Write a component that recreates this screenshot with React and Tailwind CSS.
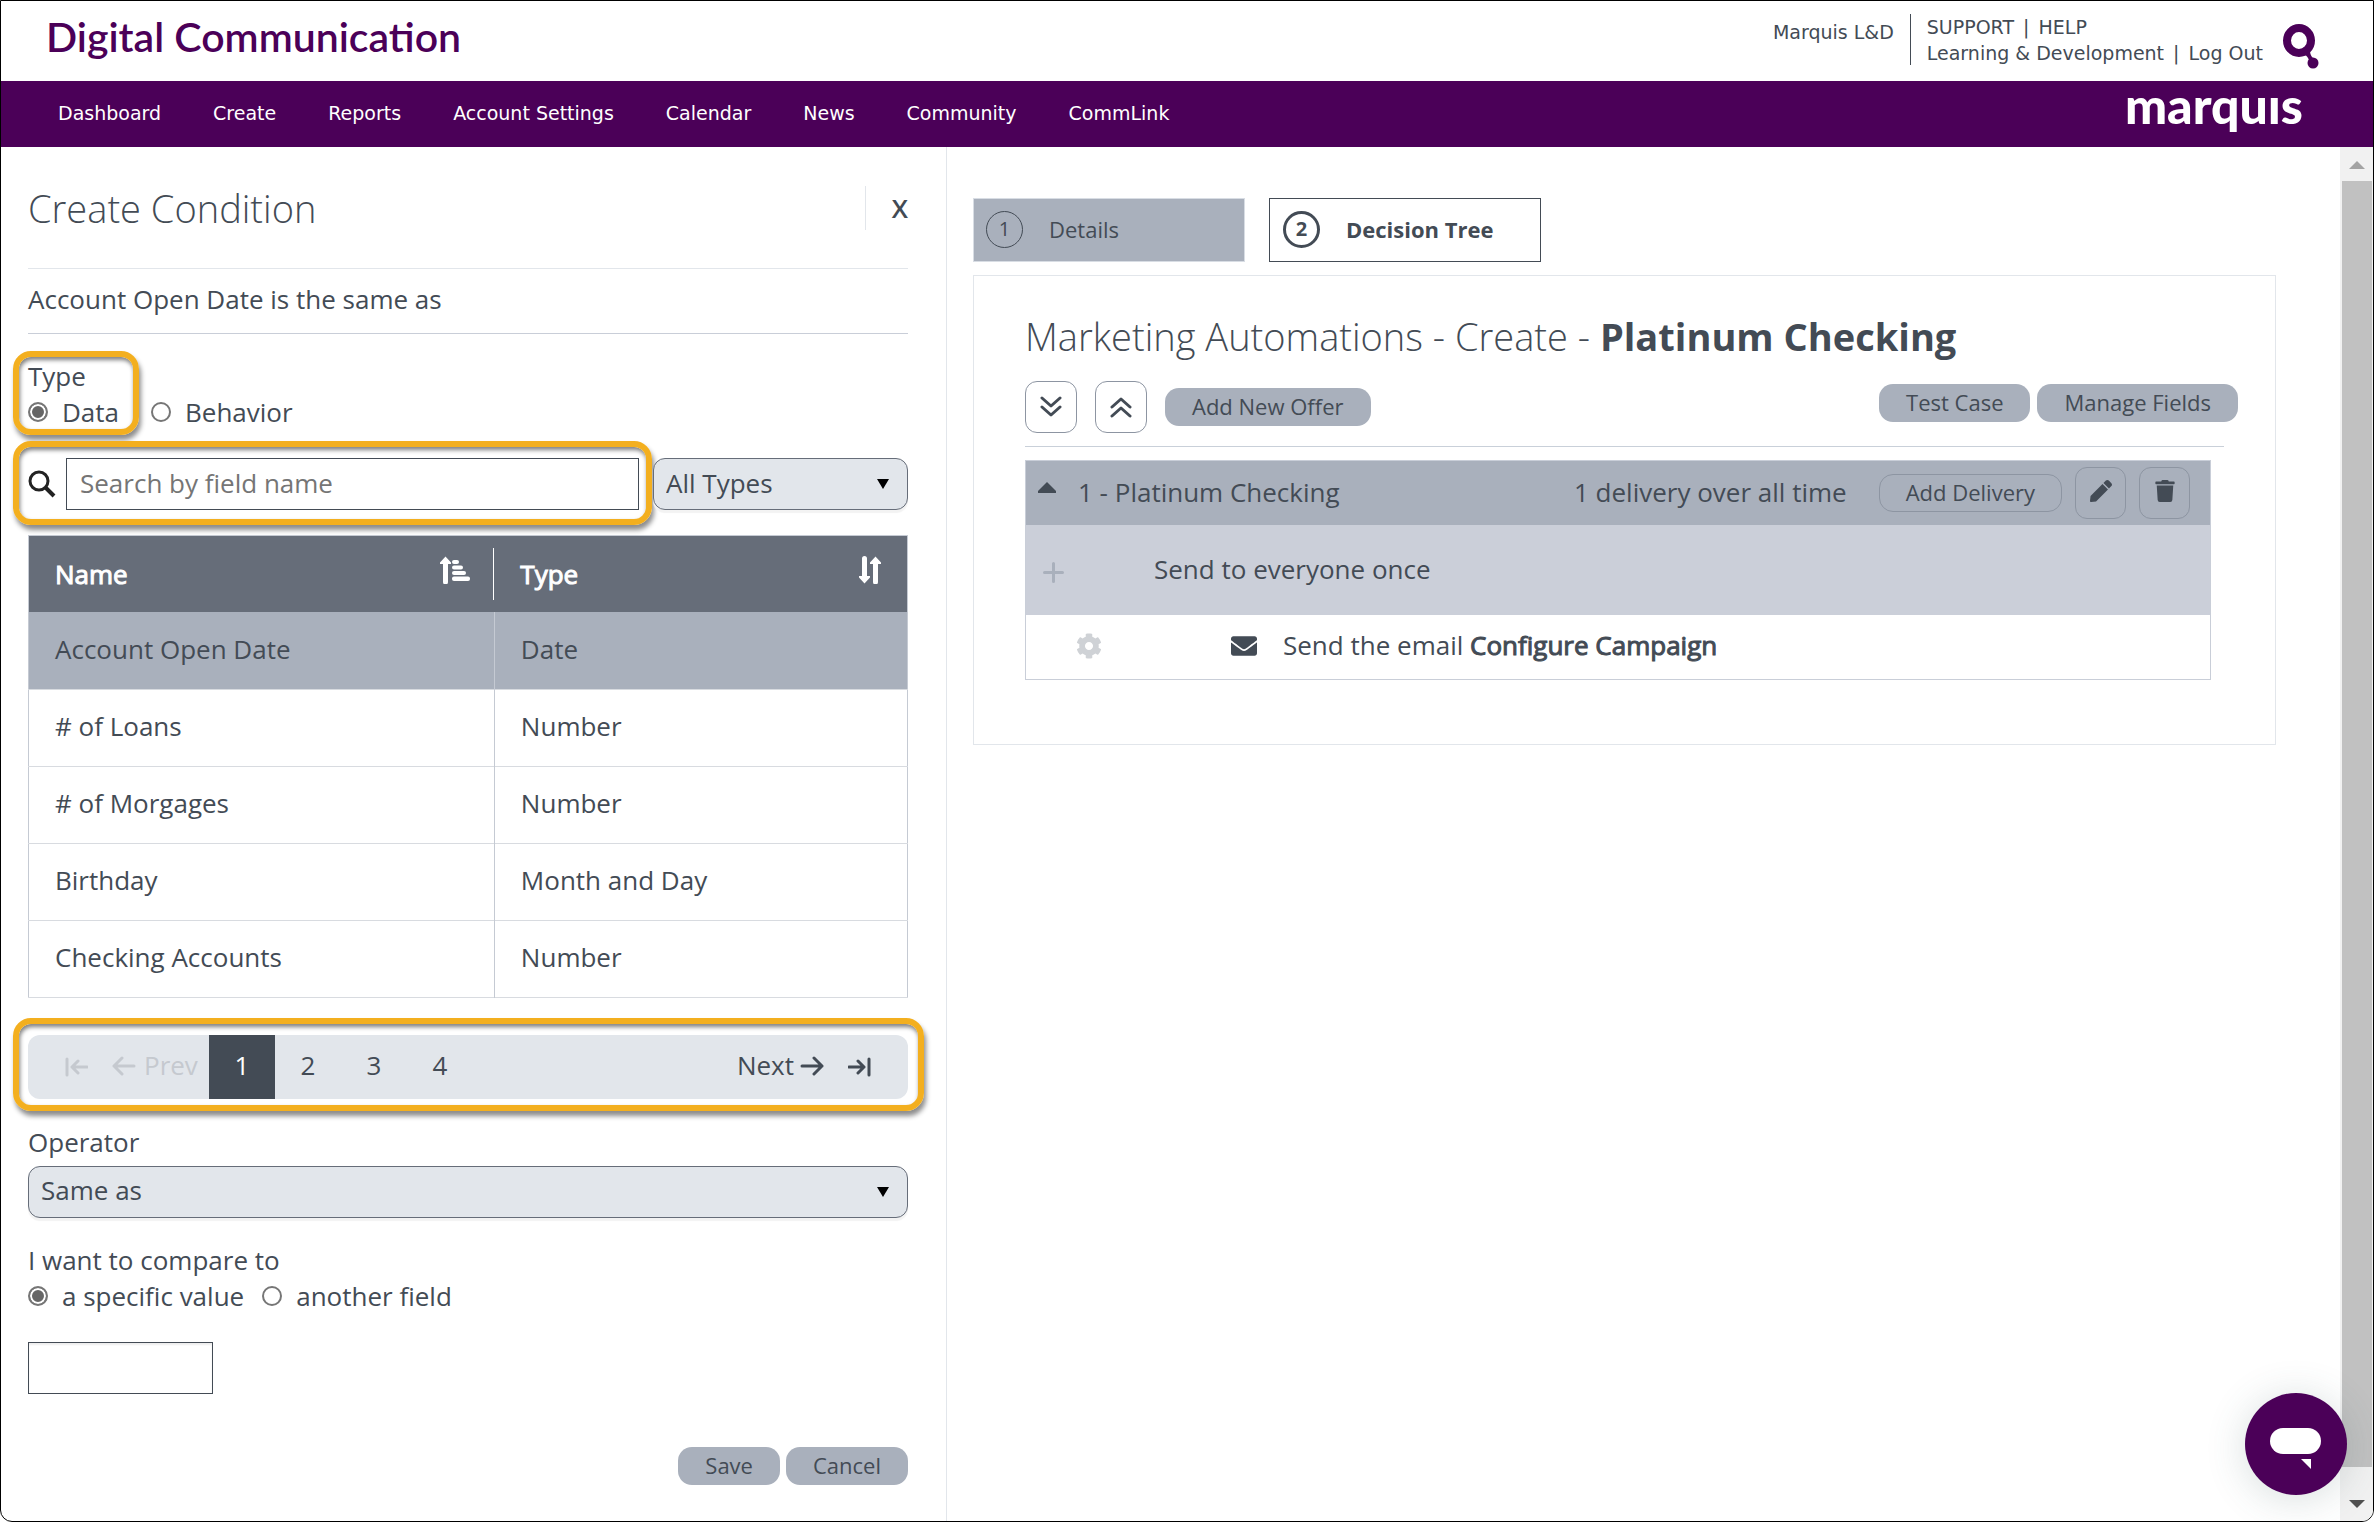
import { FaTrash, FaPen, FaCog, FaEnvelope } from "react-icons/fa";

const NAV = ["Dashboard", "Create", "Reports", "Account Settings", "Calendar", "News", "Community", "CommLink"];

const FIELDS = [
  { name: "Account Open Date", type: "Date", selected: true },
  { name: "# of Loans",        type: "Number" },
  { name: "# of Morgages",     type: "Number" },
  { name: "Birthday",          type: "Month and Day" },
  { name: "Checking Accounts", type: "Number" },
];

// Yellow callout drawn over the form
function Callout({ className }) {
  return (
    <div
      className={`pointer-events-none absolute rounded-[18px] border-6 border-[#f3af1f] shadow-[2px_5px_5px_rgba(0,0,0,0.45),inset_1px_3px_4px_rgba(0,0,0,0.5)] ${className}`}
    />
  );
}

function Arrow({ bar, flip }) {
  return (
    <svg viewBox="0 0 24 20" className={`h-5 w-6 ${flip ? "rotate-180" : ""}`} fill="none" stroke="currentColor" strokeWidth="3" strokeLinecap="round" strokeLinejoin="round">
      {bar ? <path d="M1 10h15M10 4l6 6-6 6M21 2v16" /> : <path d="M2 10h20M14 2l8 8-8 8" />}
    </svg>
  );
}

function Chevrons({ up }) {
  return (
    <svg viewBox="0 0 22 22" className={`h-[22px] w-[22px] ${up ? "rotate-180" : ""}`} fill="none" stroke="currentColor" strokeWidth="3" strokeLinecap="round" strokeLinejoin="round">
      <path d="M2 2l9 8 9-8M2 11l9 8 9-8" />
    </svg>
  );
}

function SortAscIcon() {
  return (
    <svg viewBox="0 0 30 28" className="mb-2 h-7 w-[30px]" fill="currentColor">
      <path d="M5.500 0.500L11 6.500V8H8v18a2 2 0 0 1-5 0V8H0V6.500z" />
      <rect x="12" y="4" width="7" height="4" rx="2" />
      <rect x="12" y="9.500" width="11" height="4" rx="2" />
      <rect x="12" y="15" width="14" height="4" rx="2" />
      <rect x="12" y="20.500" width="18" height="4.500" rx="2" />
    </svg>
  );
}

function SortIcon() {
  return (
    <svg viewBox="0 0 22 28" className="mb-2 h-7 w-[22px]" fill="currentColor">
      <path d="M3 2.500a2 2 0 0 1 5 0V20h3v1.500l-5.500 6-5.500-6V20h3z" />
      <path d="M16.500 0.500l5.500 6V8h-3v18a2 2 0 0 1-5 0V8h-3V6.500z" />
    </svg>
  );
}

function Radio({ name, label, checked }) {
  return (
    <label className="flex items-center gap-[14px]">
      <input
        type="radio"
        name={name}
        defaultChecked={checked}
        className="size-5 appearance-none rounded-full border-2 border-[#767676] bg-white checked:bg-[#666] checked:shadow-[inset_0_0_0_2px_#fff]"
      />
      {label}
    </label>
  );
}

function Select({ id, label, options, className }) {
  return (
    <div className={`relative ${className}`}>
      <select
        id={id}
        aria-label={label}
        className="h-[52px] w-full appearance-none rounded-xl border border-[#666d79] bg-[#e2e6eb] px-3 pb-0.5 shadow-[0_3px_1px_#f3f3f3]"
      >
        {options.map((o) => <option key={o}>{o}</option>)}
      </select>
      <svg viewBox="0 0 12 10" className="pointer-events-none absolute top-[21px] right-[19px] h-[10px] w-3 fill-black">
        <path d="M0 0h12L6 10z" />
      </svg>
    </div>
  );
}

function Pill({ children }) {
  return (
    <button className="h-[38px] rounded-[14px] bg-[#a9b0bc] px-[27px] pb-0.5 text-[22px] leading-9">
      {children}
    </button>
  );
}

function Divider() {
  return <span className="px-[3px]"> | </span>;
}

function Header() {
  return (
    <header>
      <div className="flex h-20 justify-between pr-[54px] pl-[45px]">
        <h1 className="font-['Lato'] text-[41px] leading-[72px] font-semibold text-[#4b0058]">Digital Communication</h1>
        <div className="flex font-['DejaVu_Sans'] text-[19px]">
          <span className="pt-[18px] leading-[26px]">Marquis L&amp;D</span>
          <div className="mt-[13px] ml-4 h-[51px] border-l border-[#434b55] pl-4 leading-[26px]">
            <div><a href="#support">SUPPORT</a><Divider /><a href="#help">HELP</a></div>
            <div><a href="#account">Learning &amp; Development</a><Divider /><a href="#logout">Log Out</a></div>
          </div>
          <svg viewBox="0 0 36 46" className="mt-[23px] ml-5 h-[46px] w-9" fill="#4b0058">
            <ellipse cx="16" cy="16.500" rx="12" ry="12.500" fill="none" stroke="#4b0058" strokeWidth="8" />
            <path d="M20 30l7-4c0 5 2 8 5 9l-6 6c1-5-1-9-6-11z" />
            <circle cx="30" cy="39" r="5.500" />
          </svg>
        </div>
      </div>
      <nav className="flex h-[66px] items-center justify-between bg-[#4b0058] pr-[70px] pl-[57px] text-white">
        <ul className="flex gap-[52px] pb-0.5 font-['DejaVu_Sans'] text-[19px]">
          {NAV.map((item) => <li key={item}><a href="#nav">{item}</a></li>)}
        </ul>
        {/* Wordmark has a dotless i */}
        <span aria-label="marquis" className="pb-[18px] font-['Lato'] text-[50px] leading-[48px] font-black">marquıs</span>
      </nav>
    </header>
  );
}

function FieldTable() {
  return (
    <table className="mt-[25px] w-full table-fixed border border-[#c5cad3] text-left">
      <colgroup>
        <col className="w-[53%]" />
        <col />
      </colgroup>
      <thead className="bg-[#666d79] text-white [-webkit-text-stroke:1px]">
        <tr className="h-[76px]">
          <th className="py-3 pl-[26px]">
            <div className="flex h-[52px] items-center justify-between border-r border-white pr-[23px] font-normal">
              Name
              <SortAscIcon />
            </div>
          </th>
          <th className="py-3 pr-[26px] pl-[26px]">
            <div className="flex h-[52px] items-center justify-between font-normal">
              Type
              <SortIcon />
            </div>
          </th>
        </tr>
      </thead>
      <tbody>
        {FIELDS.map((f) => (
          <tr key={f.name} className={`h-[77px] border-b border-[#d8dbe0] ${f.selected ? "bg-[#a9b0bc]" : ""}`}>
            <td className="border-r border-[#c5cad3] pb-0.5 pl-[26px]">{f.name}</td>
            <td className="pb-0.5 pl-[26px]">{f.type}</td>
          </tr>
        ))}
      </tbody>
    </table>
  );
}

function Pager() {
  return (
    <div className="relative mt-[37px]">
      <div className="flex h-16 items-center rounded-xl bg-[#e2e6eb] pr-[36px] pl-9">
        <button disabled aria-label="First page" className="text-[#c5c9cf]"><Arrow bar flip /></button>
        <button disabled className="ml-6 flex items-center gap-2 pb-0.5 text-[#c5c9cf]"><Arrow flip />Prev</button>
        <button className="ml-[11px] h-16 w-[66px] bg-[#434b55] pb-0.5 text-white">1</button>
        <button className="h-16 w-[66px] pb-0.5">2</button>
        <button className="h-16 w-[66px] pb-0.5">3</button>
        <button className="h-16 w-[66px] pb-0.5">4</button>
        <button className="ml-auto flex items-center gap-[6px] pb-0.5">Next<Arrow /></button>
        <button aria-label="Last page" className="ml-6"><Arrow bar /></button>
      </div>
      <Callout className="-top-[17px] -right-[16px] -bottom-[12px] -left-[15px]" />
    </div>
  );
}

function ConditionPanel() {
  return (
    <section className="w-[946px] shrink-0 border-r border-[#e2e6eb] pr-[38px] pl-[27px]">
      <div className="flex items-center justify-between pt-[39px]">
        <h2 className="text-[38px] leading-[44px] font-light">Create Condition</h2>
        <button aria-label="Close" className="h-[44px] border-l border-[#e2e6eb] pl-[26px] font-semibold">X</button>
      </div>
      <p className="mt-[38px] border-y border-t-[#e2e6eb] border-b-[#c9ced8] pt-[12px] pb-4 leading-9">
        Account Open Date is the same as
      </p>

      <div className="relative mt-6">
        <fieldset>
          <legend className="leading-9">Type</legend>
          <div className="flex gap-8 leading-9">
            <Radio name="type" label="Data" checked />
            <Radio name="type" label="Behavior" />
          </div>
        </fieldset>
        <Callout className="-top-[7px] -left-[15px] h-[84px] w-[126px]" />
      </div>

      <div className="mt-7 flex items-center">
        <div className="relative flex grow items-center">
          <svg viewBox="0 0 28 28" className="size-7" fill="none" stroke="#222" strokeWidth="3">
            <circle cx="11" cy="11" r="9" />
            <path d="M17.500 17.500L26 26" strokeWidth="4" />
          </svg>
          <input
            aria-label="Search by field name"
            placeholder="Search by field name"
            className="ml-[10px] h-[52px] grow border border-[#434b55] px-[13px] pb-0.5 placeholder:text-[#757575]"
          />
          <Callout className="-top-[17px] -right-[13px] -left-[15px] h-[84px]" />
        </div>
        <Select id="types" label="Field type" options={["All Types", "Date", "Number"]} className="ml-[14px] w-[255px]" />
      </div>

      <FieldTable />
      <Pager />

      <label htmlFor="operator" className="mt-[25px] block leading-9">Operator</label>
      <Select id="operator" label="Operator" options={["Same as", "Before", "After"]} className="mt-[6px]" />

      <fieldset className="mt-[24px]">
        <legend className="leading-9">I want to compare to</legend>
        <div className="flex gap-[18px] leading-9">
          <Radio name="compare" label="a specific value" checked />
          <Radio name="compare" label="another field" />
        </div>
      </fieldset>
      <input aria-label="Value" className="mt-[28px] block h-[52px] w-[185px] border border-[#434b55] px-3 shadow-[inset_0_2px_2px_#eee]" />

      <div className="mt-[53px] flex justify-end gap-[6px]">
        <Pill>Save</Pill>
        <Pill>Cancel</Pill>
      </div>
    </section>
  );
}

function DecisionTree() {
  return (
    <main className="min-w-0 grow pt-[51px] pr-[64px] pl-[26px]">
      <div className="flex gap-6 text-[22px]">
        <button className="flex h-16 w-[272px] items-center border border-[#d8dde4] bg-[#a9b0bc] pb-0.5 pl-3">
          <span className="mr-[26px] flex size-[37px] items-center justify-center rounded-full border border-[#434b55] text-[20px]">1</span>
          Details
        </button>
        <button className="flex h-16 w-[272px] items-center border border-[#434b55] pb-0.5 pl-[13px] font-bold">
          <span className="mr-[26px] flex size-[37px] items-center justify-center rounded-full border-3 border-[#434b55] text-[20px]">2</span>
          Decision Tree
        </button>
      </div>

      <div className="mt-[13px] border border-[#e2e6eb] pt-[32px] pr-[37px] pb-[64px] pl-[51px]">
        <h2 className="text-[38px] leading-[56px] font-light">
          Marketing Automations - Create - <b className="font-bold">Platinum Checking</b>
        </h2>
        <div className="mt-[17px] flex items-center">
          <button aria-label="Expand all" className="flex h-[52px] w-[52px] items-center justify-center rounded-xl border border-[#8d95a2]"><Chevrons /></button>
          <button aria-label="Collapse all" className="mr-[18px] ml-[18px] flex h-[52px] w-[52px] items-center justify-center rounded-xl border border-[#8d95a2]"><Chevrons up /></button>
          <Pill>Add New Offer</Pill>
          <div className="mb-2 ml-auto flex gap-[7px]">
            <Pill>Test Case</Pill>
            <Pill>Manage Fields</Pill>
          </div>
        </div>
        <hr className="mt-[13px] mr-[14px] border-[#c9d0d9]" />

        <div className="mt-[13px] mr-[27px] border border-[#c9ced8]">
          <div className="flex h-16 items-center bg-[#a9b0bc] pr-5 pl-3">
            <svg viewBox="0 0 18 11" className="mr-[22px] mb-3 h-[11px] w-[18px] fill-[#434b55]"><path d="M9 0l9 9v2H0V9z" /></svg>
            <span className="pb-0.5">1 - Platinum Checking</span>
            <span className="ml-auto pb-0.5">1 delivery over all time</span>
            <button className="ml-8 h-[38px] rounded-[14px] border border-[#8d95a2] px-[26px] pb-0.5 text-[22px] leading-[34px]">Add Delivery</button>
            <button aria-label="Edit" className="ml-[13px] flex h-[52px] w-[51px] items-center justify-center rounded-xl border border-[#8d95a2]"><FaPen className="mb-1 size-[22px]" /></button>
            <button aria-label="Delete" className="ml-[13px] flex h-[52px] w-[51px] items-center justify-center rounded-xl border border-[#8d95a2]"><FaTrash className="mb-1 size-[22px]" /></button>
          </div>
          <div className="flex h-[90px] items-center bg-[#cbcfd9] pl-[17px]">
            <svg viewBox="0 0 21 21" className="mt-1 mr-[90px] size-[21px]" fill="none" stroke="#a9b0bc" strokeWidth="3" strokeLinecap="round">
              <path d="M10.500 1.500v18M1.500 10.500h18" />
            </svg>
            <span className="pb-0.5">Send to everyone once</span>
          </div>
          <div className="flex h-16 items-center pb-0.5 pl-[50px]">
            <FaCog className="mr-[129px] size-[26px] text-[#cfd2d6]" />
            <FaEnvelope className="mr-[26px] size-[26px]" />
            <span className="pb-0.5">Send the email <b className="font-normal [-webkit-text-stroke:1px]">Configure Campaign</b></span>
          </div>
        </div>
      </div>
    </main>
  );
}

export default function App() {
  return (
    <div className="relative flex h-screen flex-col overflow-hidden rounded-b-xl border border-black bg-white font-['Open_Sans',sans-serif] text-[26px] text-[#434b55]">
      <Header />
      <div className="flex min-h-0 grow">
        <ConditionPanel />
        <DecisionTree />
        {/* Scrollbar */}
        <div className="flex w-[33px] shrink-0 flex-col items-center justify-between bg-[#f1f1f1]">
          <svg viewBox="0 0 16 8" className="mt-[14px] mb-3 h-2 w-4 shrink-0 fill-[#a3a3a3]"><path d="M8 0l8 8H0z" /></svg>
          <div className="w-[30px] grow bg-[#c1c1c1]" />
          <svg viewBox="0 0 16 8" className="mt-[33px] mb-[13px] h-2 w-4 shrink-0 fill-[#505050]"><path d="M0 0h16L8 8z" /></svg>
        </div>
      </div>
      <button aria-label="Open chat" className="absolute right-[26px] bottom-[26px] size-[102px] rounded-full bg-[#4b0058] shadow-[0_4px_40px_rgba(60,90,90,0.2)]">
        <svg viewBox="0 0 102 102" className="size-full fill-white">
          <rect x="25" y="35" width="51" height="26" rx="13" />
          <path d="M56 66h10v10z" />
        </svg>
      </button>
    </div>
  );
}
